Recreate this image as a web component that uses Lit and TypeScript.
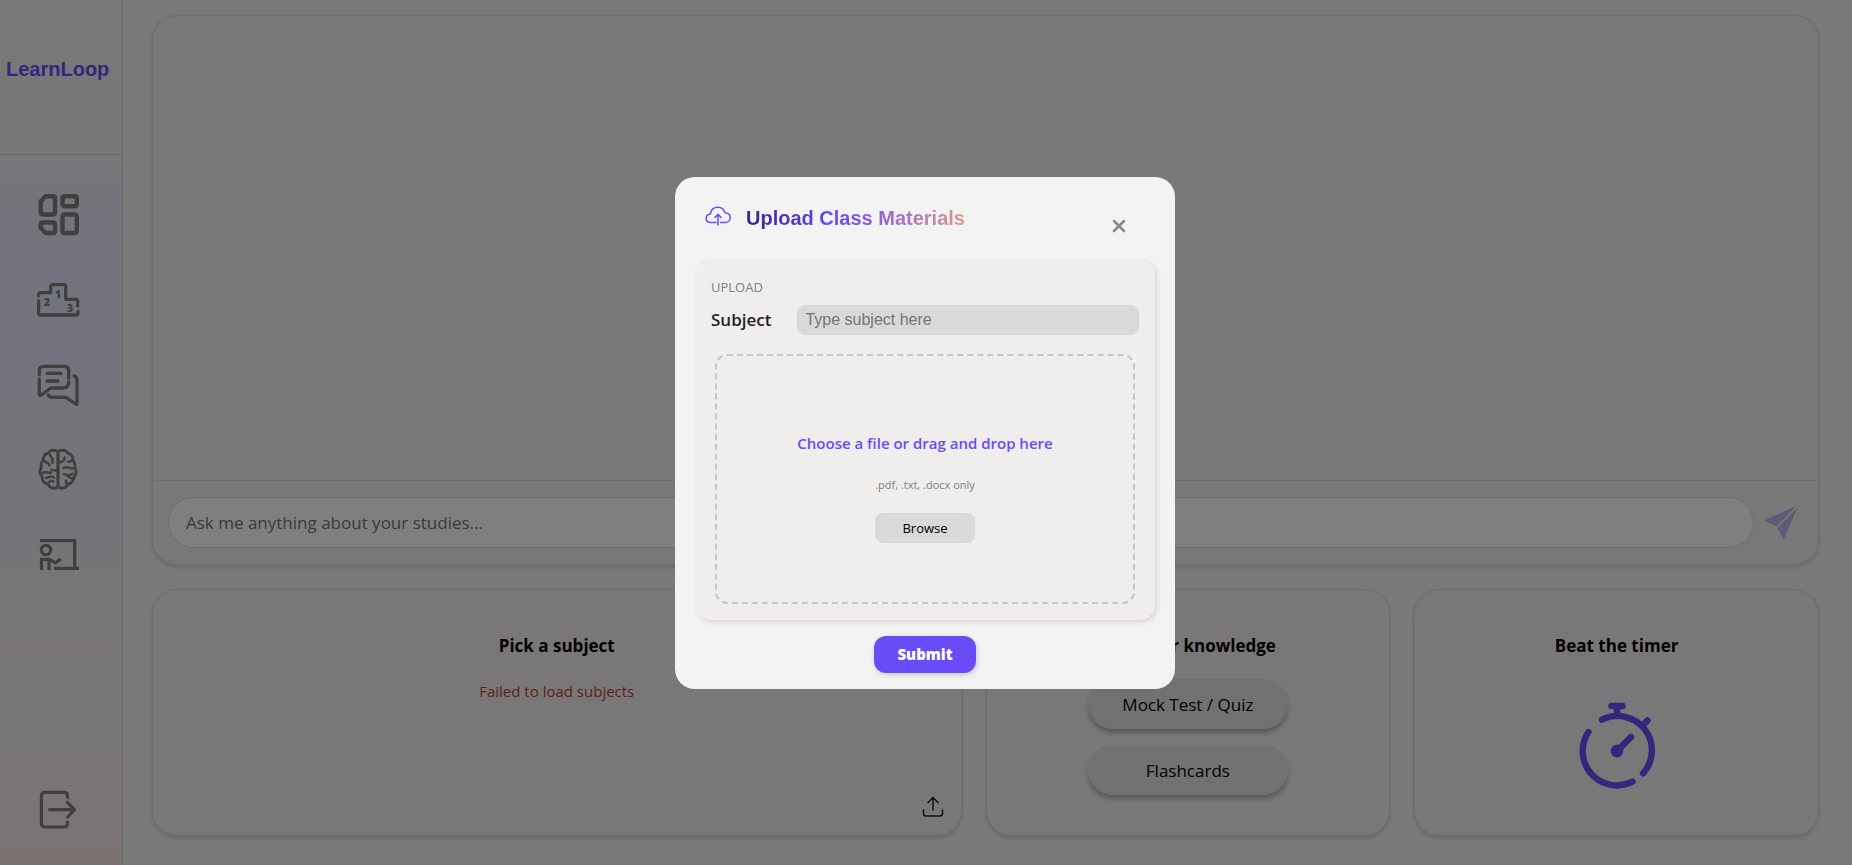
import { LitElement, html, css, svg } from "lit";
import { customElement } from "lit/decorators.js";

const navIcons = [
  {
    label: "Dashboard",
    art: svg`<g stroke-width="4.4">
      <path d="M8.500 3.200H16q2 0 2 2V19.500q0 2-2 2H5.700q-2 0-2-2V8.500Z"/>
      <rect x="25.5" y="3.2" width="14.3" height="10" rx="2"/>
      <rect x="25.5" y="21.5" width="14.3" height="18.5" rx="2"/>
      <path d="M5.700 29.500H16q2 0 2 2V38q0 2-2 2H8.700L3.700 35V31.500q0-2 2-2Z"/></g>`,
  },
  {
    label: "Leaderboard",
    art: svg`<g stroke-width="3.3">
      <path d="M1.600 18V16.700q0-2 2-2H13.700V8.700q0-2 2-2H26.700q2 0 2 2V21.300H38.700q2 0 2 2V28"/>
      <path d="M41 33.300V35q0 2-2 2H3.600q-2 0-2-2V22.700"/></g>
      <g class="digits"><text x="21" y="19.5">1</text><text x="10" y="28">2</text><text x="33" y="34">3</text></g>`,
  },
  {
    label: "Discussions",
    art: svg`<g stroke-width="3.3">
      <path d="M2.300 11.700V7.500Q2.300 3.300 6.500 3.300H27.500Q31.700 3.300 31.700 7.500V15.500"/>
      <path d="M31.700 19Q31.700 25 26 25H13.700L4 32.300Q2.400 33 2.300 31.500V16"/>
      <path d="M10 10.300H24M10 18H21"/>
      <path d="M37 13Q40 13.500 40 17V40.500Q40 41.700 38.800 41L29 34.300H15.500Q12 34.300 11.300 32"/></g>`,
  },
  {
    label: "Study skills",
    art: svg`<g stroke-width="2.8">
      <path d="M21 4C19 1.500 13 1.500 11.500 5C8 5.500 5.500 9 6.500 12C4 14 3.500 17.500 4.500 19.500C2 22 2.500 26.500 5 28.500C4.800 32.500 8 36 11 36C13 41 19.500 41.500 21 38Z"/>
      <path d="M21 4C23 1.500 29 1.500 30.500 5C34 5.500 36.500 9 35.500 12C38 14 38.500 17.500 37.500 19.500C40 22 39.500 26.500 37 28.500C37.200 32.500 34 36 31 36C29 41 22.500 41.500 21 38Z"/></g>
      <g stroke-width="2.4">
      <path d="M13 6.500C13 9 15.500 9 15.500 12V15M7 12.500C8.500 15.500 12 14 12.500 17.500M14.500 21.500C16.500 23.500 18.500 22 21 22M5.500 25C8 23 11 25.500 14 24.500M9 30C12 30 13.500 27 17 29.500M12 35C12.500 32.500 15 32.500 16.500 33.500"/>
      <path d="M27.500 9.500C28 13 24 14.500 21.500 14.500M35 12.500C33.500 13.500 32.500 14 31 13.500M37 20C33 22 31.500 17.500 26.500 20M35.500 30.500C31.500 31 31 26.500 27 26M31.500 27C33.500 27 34.500 26.500 35.500 25.500M29 32.500V35"/></g>`,
  },
  {
    label: "Classroom",
    art: svg`<g stroke-width="3.2" stroke-linecap="butt" stroke-linejoin="miter">
      <path d="M3 7.700H37.700V35.500M17 35.400H42"/>
      <circle cx="9" cy="17" r="4.7"/>
      <path d="M4.500 37V26.400H12.500L18.300 29.800L24 26M12 37V27"/></g>`,
  },
];

@customElement("app-root")
export class AppRoot extends LitElement {
  static styles = css`
    :host {
      display: block;
      min-height: 100vh;
      color: #000;
      background: #f3f3f3;
      font-family: "Segoe UI", "Open Sans", "Noto Sans", sans-serif;
    }
    * { box-sizing: border-box; }
    h1, h2, p { margin: 0; }
    button, input { font: inherit; color: inherit; }
    button { border: 0; padding: 0; background: none; cursor: pointer; }
    svg { display: block; fill: none; stroke: currentColor; stroke-linecap: round; stroke-linejoin: round; }

    .page { display: flex; min-height: 100vh; }

    .sidebar {
      display: flex;
      flex-direction: column;
      flex: none;
      width: 123px;
      border-right: 1px solid #d2d2d4;
      color: #7e7e7e;
      background: linear-gradient(#f3eeee 0, #f1eeee 13%, #eeeff1 17%, #e9eaf4 23%, #e4e7fa 30%, #e7e8fb 42%, #ebe9f2 50%, #ede9f1 62%, #f3ecf0 78%, #f3ecea 90%, #f5eaea 97%, #fae0e0 100%);
    }
    .brand {
      display: flex;
      align-items: center;
      height: 155px;
      padding: 0 6px 17px;
      border-bottom: 1px solid #d2d2d4;
      font: 700 20px/24px "Liberation Sans", Arial, sans-serif;
      color: #6a4bf8;
    }
    .nav { display: flex; flex: 1; flex-direction: column; align-items: center; gap: 41px; padding: 38px 4px 33px 0; }
    .nav a { color: inherit; }
    .nav .exit { margin-top: auto; }
    .digits { fill: currentColor; stroke: none; font: 800 11px "Open Sans", sans-serif; text-anchor: middle; }

    .main { display: flex; flex: 1; flex-direction: column; gap: 24px; padding: 15px 33px 29px 29px; }
    .card {
      border: 1px solid #dedada;
      border-radius: 25px;
      background: #f3eeee;
      box-shadow: 0 2px 4px rgba(0, 0, 0, 0.15);
    }
    .chat { display: flex; flex: 1; flex-direction: column; }
    .messages { flex: 1; }
    .ask { display: flex; align-items: center; gap: 10px; padding: 16px 18px 16px 15px; border-top: 1px solid #e2dddd; }
    .ask input {
      flex: 1;
      min-width: 0;
      height: 51px;
      padding: 0 17px;
      border: 1px solid #dcdcdc;
      border-radius: 26px;
      background: #fff;
      font-size: 17px;
    }
    .ask input::placeholder { color: #757575; }
    .send { color: #bcb0f2; }

    .tools { display: grid; grid-template-columns: 2fr 1fr 1fr; gap: 24px; }
    .tool { position: relative; display: flex; flex-direction: column; align-items: center; height: 247px; padding-top: 42px; }
    .tool h2 { font-size: 17px; line-height: 27px; font-weight: 700; }
    .error { margin-top: 20px; font-size: 15px; line-height: 24px; color: #b8413c; }
    .upload-icon { position: absolute; right: 16px; bottom: 16px; color: #222; }
    .pills { display: grid; gap: 16px; width: 200px; margin-top: 20px; }
    .pills button {
      height: 50px;
      border-radius: 25px;
      background: #e5e3e3;
      box-shadow: 0 4px 4px rgba(0, 0, 0, 0.25);
      font-size: 17px;
    }
    .timer { margin-top: 38px; color: #6a4bf8; }

    .backdrop {
      position: fixed;
      inset: 0;
      display: flex;
      align-items: center;
      justify-content: center;
      padding-right: 2px;
      background: rgba(0, 0, 0, 0.5);
    }
    .modal {
      display: flex;
      flex-direction: column;
      align-items: center;
      width: 500px;
      padding: 16px 20px;
      border-radius: 20px;
      background: #f3f3f3;
    }
    .modal-head { display: flex; align-items: center; align-self: stretch; height: 50px; padding: 0 21px 0 10px; }
    .modal-head h1 {
      margin-left: 15px;
      font: 700 20px/24px "Liberation Sans", Arial, sans-serif;
      color: transparent;
      background: linear-gradient(90deg, #38248e, #6a4bf8 42%, #df9a92);
      background-clip: text;
      -webkit-background-clip: text;
    }
    .cloud { margin-bottom: 4px; color: #6a4bf8; }
    .close { align-self: flex-end; margin-left: auto; padding: 8px 8px 10px; color: #888; }
    .panel {
      align-self: stretch;
      margin-top: 17px;
      padding: 16px;
      border-radius: 15px;
      background: #efeeec;
      box-shadow: 2px 2px 5px rgba(80, 30, 30, 0.15);
    }
    .eyebrow { font-size: 13px; line-height: 22px; color: #808080; }
    .field { display: flex; align-items: center; gap: 26px; margin-top: 7px; }
    .field label { font-size: 17px; line-height: 24px; font-weight: 600; color: #222; }
    .field input {
      flex: 1;
      min-width: 0;
      height: 30px;
      padding: 0 8px;
      border: 0;
      border-radius: 8px;
      background: #d9d9d9;
      font: 16px "Liberation Sans", Arial, sans-serif;
    }
    .field input::placeholder { color: #757575; }
    .drop {
      display: flex;
      flex-direction: column;
      align-items: center;
      justify-content: center;
      height: 250px;
      margin: 19px 4px 0;
      padding-top: 17px;
      border: 2px dashed #c6c6c6;
      border-radius: 12px;
    }
    .drop-title { font-size: 15px; line-height: 24px; font-weight: 600; color: #6a4bf8; }
    .types { margin-top: 22px; font-size: 11px; line-height: 16px; color: #808080; }
    .browse { width: 100px; height: 30px; margin-top: 20px; border-radius: 8px; background: #d9d9d9; font-size: 13px; }
    .submit {
      width: 102px;
      height: 37px;
      margin-top: 16px;
      border-radius: 12px;
      background: #6a4bf8;
      box-shadow: 1px 2px 5px rgba(80, 30, 30, 0.2);
      color: #fff;
      font-size: 15px;
      font-weight: 800;
    }
  `;

  render() {
    return html`
      <div class="page">
        <aside class="sidebar">
          <div class="brand">LearnLoop</div>
          <nav class="nav">
            ${navIcons.map((item) => html`<a href="#" aria-label=${item.label}>
              <svg width="44" height="44" viewBox="0 0 44 44">${item.art}</svg></a>`)}
            <a class="exit" href="#" aria-label="Log out">
              <svg width="44" height="44" viewBox="0 0 44 44" stroke-width="3.2">
                <path d="M30.500 9.500V8Q30.500 4.400 27 4.400H8Q4.400 4.400 4.400 8V35.500Q4.400 39 8 39H27Q30.500 39 30.500 35.500V34"/>
                <path d="M12.500 21.700H37M30.500 14.500L37.500 21.700L30.500 29"/>
              </svg>
            </a>
          </nav>
        </aside>
        <main class="main">
          <section class="card chat">
            <div class="messages"></div>
            <form class="ask">
              <input type="text" aria-label="Question" placeholder="Ask me anything about your studies..." />
              <button class="send" type="button" aria-label="Send">
                <svg width="36" height="36" viewBox="0 0 36 36">
                  <path fill="currentColor" stroke="none" d="M0 15.500L32 1L12.500 21.500ZM13.500 23L33.500 2.500L19.500 35Z"/>
                </svg>
              </button>
            </form>
          </section>
          <div class="tools">
            <section class="card tool">
              <h2>Pick a subject</h2>
              <p class="error">Failed to load subjects</p>
              <button class="upload-icon" aria-label="Upload">
                <svg width="24" height="24" viewBox="0 0 24 24" stroke-width="1.5">
                  <path d="M2.500 15V18.500Q2.500 21 5 21H19Q21.500 21 21.500 18.500V15M12 15V2.500M7 7.500L12 2.500L17 7.500"/>
                </svg>
              </button>
            </section>
            <section class="card tool">
              <h2>Test your knowledge</h2>
              <div class="pills">
                <button>Mock Test / Quiz</button>
                <button>Flashcards</button>
              </div>
            </section>
            <section class="card tool">
              <h2>Beat the timer</h2>
              <button class="timer" aria-label="Start timer">
                <svg width="80" height="92" viewBox="0 0 80 92" stroke-width="6.4">
                  <path d="M25 22.700A34.300 34.300 0 0 1 66 76.300"/>
                  <path d="M11.500 35A34.300 34.300 0 0 0 55.500 84.700"/>
                  <path d="M34.500 9H45.500M40 9V19M66 28L70.500 23.500M40 54L54 40"/>
                  <circle cx="40" cy="54" r="3.2"/>
                </svg>
              </button>
            </section>
          </div>
        </main>
      </div>
      <div class="backdrop">
        <div class="modal" role="dialog" aria-modal="true" aria-labelledby="title">
          <header class="modal-head">
            <svg class="cloud" width="26" height="20" viewBox="0 0 26 20" stroke-width="1.5">
              <path d="M11 16.500H5.500C-.5 16 -.2 8.700 5.500 8C6.500 -.5 18 -1 19.800 6.700C26.800 7 27 16 20.500 16.500H15.500M13 19V8.500M10 11.500L13 8.300L16 11.500"/>
            </svg>
            <h1 id="title">Upload Class Materials</h1>
            <button class="close" aria-label="Close">
              <svg width="14" height="14" viewBox="0 0 14 14" stroke-width="2.5"><path d="M2 2L12 12M12 2L2 12"/></svg>
            </button>
          </header>
          <section class="panel">
            <p class="eyebrow">UPLOAD</p>
            <div class="field">
              <label for="subject">Subject</label>
              <input id="subject" type="text" placeholder="Type subject here" />
            </div>
            <div class="drop">
              <p class="drop-title">Choose a file or drag and drop here</p>
              <p class="types">.pdf, .txt, .docx only</p>
              <button class="browse">Browse</button>
            </div>
          </section>
          <button class="submit">Submit</button>
        </div>
      </div>
    `;
  }
}
